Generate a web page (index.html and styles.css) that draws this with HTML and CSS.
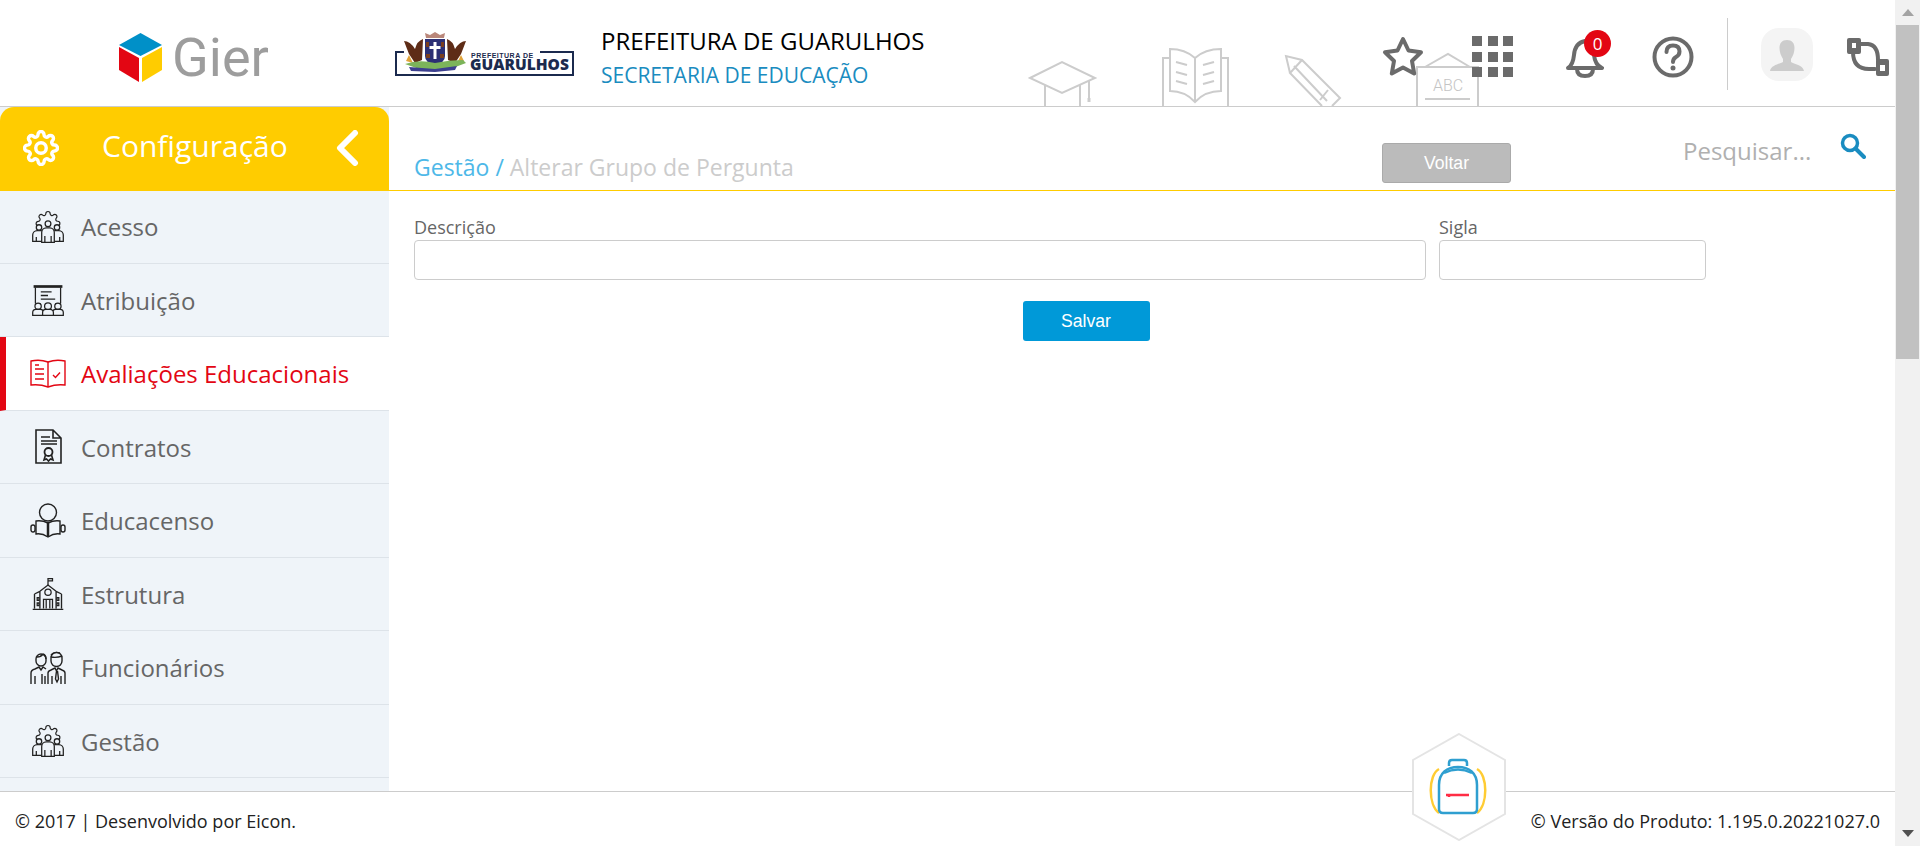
FILE: index.html
```html
<!DOCTYPE html>
<html lang="pt-BR">

<head>
	<meta charset="UTF-8">
	<meta name="viewport" content="width=device-width, initial-scale=1.0">
	<title>Alterar Grupo de Pergunta</title>
	<link rel="stylesheet" href="styles.css">
</head>

<body>

	<svg class="defs" width="0" height="0" aria-hidden="true">
		<symbol id="i-team" viewBox="-2 -2 40 40">
			<path transform="translate(3.6,-0.4) scale(1.2)" stroke-width="1.100" d="M19.4 15a1.65 1.65 0 0 0 .33 1.82l.06.06a2 2 0 0 1 0 2.83 2 2 0 0 1-2.83 0l-.06-.06a1.65 1.65 0 0 0-1.82-.33 1.65 1.65 0 0 0-1 1.51V21a2 2 0 0 1-2 2 2 2 0 0 1-2-2v-.09A1.65 1.65 0 0 0 9 19.4a1.65 1.65 0 0 0-1.82.33l-.06.06a2 2 0 0 1-2.83 0 2 2 0 0 1 0-2.83l.06-.06a1.65 1.65 0 0 0 .33-1.82 1.65 1.65 0 0 0-1.51-1H3a2 2 0 0 1-2-2 2 2 0 0 1 2-2h.09A1.65 1.65 0 0 0 4.6 9a1.65 1.65 0 0 0-.33-1.82l-.06-.06a2 2 0 0 1 0-2.83 2 2 0 0 1 2.83 0l.06.06a1.65 1.65 0 0 0 1.82.33H9a1.65 1.65 0 0 0 1-1.51V3a2 2 0 0 1 2-2 2 2 0 0 1 2 2v.09a1.65 1.65 0 0 0 1 1.51 1.65 1.65 0 0 0 1.82-.33l.06-.06a2 2 0 0 1 2.83 0 2 2 0 0 1 0 2.83l-.06.06a1.65 1.65 0 0 0-.33 1.82V9a1.65 1.65 0 0 0 1.51 1H21a2 2 0 0 1 2 2 2 2 0 0 1-2 2h-.09a1.65 1.65 0 0 0-1.51 1z"/>
			<g fill="#eff4f9">
				<path d="M1 34v-7a5 5 0 0 1 5-5h4a5 5 0 0 1 5 5v7z"/>
				<path d="M21 34v-7a5 5 0 0 1 5-5h4a5 5 0 0 1 5 5v7z"/>
				<circle cx="8" cy="18.500" r="3"/>
				<circle cx="28" cy="18.500" r="3"/>
				<path d="M11 35V24a5 5 0 0 1 5-5h4a5 5 0 0 1 5 5v11z"/>
				<circle cx="18" cy="14.500" r="3.200"/>
			</g>
			<path d="M5 29v5M31 29v5M14.500 28v7M21.500 28v7"/>
		</symbol>
		<symbol id="i-class" viewBox="-2 -2 40 40">
			<path d="M2 3h32" stroke-width="3"/>
			<path d="M4 4v18M32 4v18M4 22h6M26 22h6M10 9h12M10 13h8M10 17h16" />
			<g fill="#eff4f9">
				<circle cx="7" cy="25" r="3.500"/>
				<circle cx="29" cy="25" r="3.500"/>
				<circle cx="18" cy="25" r="3.800"/>
				<path d="M1 35v-3a3.500 3.500 0 0 1 3.500-3.500h5a3.500 3.500 0 0 1 3.500 3.500v3z"/>
				<path d="M23 35v-3a3.500 3.500 0 0 1 3.500-3.500h5a3.500 3.500 0 0 1 3.500 3.500v3z"/>
				<path d="M12 35v-3a3.500 3.500 0 0 1 3.500-3.500h5a3.500 3.500 0 0 1 3.500 3.500v3z"/>
			</g>
		</symbol>
		<symbol id="i-exam" viewBox="0 0 36 36">
			<path d="M1 5q9-2 17 1q8-3 17-1v24q-9-1-17 2q-8-3-17-2z"/>
			<path d="M18 6v25M5 9h4M5 13h9M5 18h9M5 23h9M23 19l2.500 2.500 4.500-5"/>
		</symbol>
		<symbol id="i-contract" viewBox="0 0 36 36">
			<path d="M6 1h17l8 8v25H6zM23 1v8h8" stroke-width="1.600"/>
			<path d="M11 8h9M11 12h16M11 15h16"/>
			<circle cx="18.500" cy="23" r="4" stroke-width="1.800"/>
			<path d="M15.500 26l-1.500 5 2.500-1 2 2 2-2 2.500 1-1.500-5" stroke-width="1.600"/>
		</symbol>
		<symbol id="i-reader" viewBox="0 0 36 36">
			<circle cx="18" cy="9.500" r="8.500"/>
			<path d="M18 20q-6-3-12-2v13q6-1 12 3q6-4 12-3V18q-6-1-12 2z" fill="#eff4f9"/>
			<path d="M18 20v14" stroke-width="2.500"/>
			<rect x="1" y="22" width="4" height="7" rx="2"/>
			<rect x="31" y="22" width="4" height="7" rx="2"/>
		</symbol>
		<symbol id="i-school" viewBox="-2 -1 40 38">
			<path d="M18 8V1h5v2.500h-5"/>
			<path d="M9 15l9-7 9 7M3 18l6-3v19M33 18l-6-3v19M3 18v16M33 18v16M1 35h34" stroke-width="1.500"/>
			<circle cx="18" cy="16" r="3.500"/>
			<path d="M13 34V24h10v10M16 24v10M20 24v10M6 22h2v3H6zM28 22h2v3h-2zM6 28h2v3H6zM28 28h2v3h-2z"/>
		</symbol>
		<symbol id="i-staff" viewBox="0 0 36 36">
			<path d="M6 9a5 5 0 0 1 10 0v2a5 5 0 0 1-10 0z"/>
			<path d="M7 7q4 0 6-3M13 4q3 1 3 5"/>
			<path d="M21 8a5.500 5.500 0 0 1 11 0v3a5.500 5.500 0 0 1-11 0z"/>
			<path d="M21 7q6 1 11-1M21 5q3-4 9-2"/>
			<path d="M1 34V23q0-3 4-4l4-2 2 3 2-3 3 2M5 26v8M12 24v10M15 26v8"/>
			<path d="M18 34V23q0-2 3-3l4-2 1.500 3 1.500-3 4 2q3 1 3 3v11M22 26v8M31 26v8M26.500 21l-1 8 1.500 3 1.500-3-1-8"/>
		</symbol>
	</svg>

	<div class="page">
		<header class="topbar">
			<svg class="topbar-art" viewBox="1020 45 470 62" aria-hidden="true">
				<path d="M1030 78l32-16 33 16-33 15zM1045 85v21M1080 85v21M1089 81v17"/>
				<path d="M1089 98v4" stroke-width="3"/>
				<path d="M1170 58h-7v48M1221 58h7v48M1170 49q15 0 25 9 10-9 26-9v42q-16 0-26 11-10-11-25-11zM1195 58v44"/>
				<path d="M1176 62l11 3M1176 72l11 3M1176 81l11 3M1214 62l-11 3M1214 72l-11 3M1214 81l-11 3"/>
				<path d="M1290 73l-4-17 16 4 38 38-8 8M1322 106l-32-33 12-13M1294 66l33 35M1328 90l-8 10"/>
				<path d="M1417 106V67h61v39M1425 67l23-13 22 13"/>
				<path d="M1425 99h45"/>
				<text x="1448" y="91" text-anchor="middle" class="abc">ABC</text>
			</svg>

			<div class="brand">
				<svg class="cube" viewBox="0 0 44 49" aria-hidden="true">
					<path fill="#0090c8" d="M21.500 0L43 12 21.500 23 0 12z"/>
					<path fill="#e30613" d="M0 14l20 11v24L0 37z"/>
					<path fill="#ffcc00" d="M23 25l20-11v23L23 49z"/>
				</svg>
				<span class="brand-name">Gier</span>
			</div>

			<svg class="city-logo" viewBox="0 0 180 46" role="img" aria-label="Prefeitura de Guarulhos">
				<path class="city-frame" d="M9 21H1v23h177V21h-33"/>
				<path fill="#b9877a" d="M31 7l-1-5 5 2 5-3 5 3 5-2-1 5z"/>
				<path fill="#5e2c17" d="M28 8q-6 2-8 10-5-8-11-8 3 8 5 13l6 9 7-3z"/>
				<path fill="#5e2c17" d="M52 8q6 2 8 10 5-8 11-8-3 8-5 13l-6 9-7-3z"/>
				<path fill="#e0a33a" d="M14 24l4 8-7-2zM66 24l-4 8 7-2z"/>
				<path fill="#2c2f74" d="M30 8h20v17q0 7-10 9-10-2-10-9z"/>
				<path fill="#fff" d="M38.500 11h3v4h4v3h-4v10h-3V18h-4v-3h4z"/>
				<path fill="#7a3d1e" d="M31 11h3v5h-3zM46 11h3v5h-3zM31 23h4v4h-4zM45 23h4v4h-4z"/>
				<path fill="#7cb45a" d="M10 33q14-5 30-1 14-3 28-3l3 3-16 6-28 1z"/>
				<path fill="#3c3f8f" d="M14 36l26 2 22-3-2 4-20 2-24-1z"/>
				<text x="76" y="26.500" class="city-small">PREFEITURA DE</text>
				<text x="75" y="39" class="city-big">GUARULHOS</text>
			</svg>

			<div class="org">
				<div class="org-name">PREFEITURA DE GUARULHOS</div>
				<div class="org-dept">SECRETARIA DE EDUCAÇÃO</div>
			</div>

			<div class="tools">
				<svg class="tool" viewBox="0 0 42 42" aria-hidden="true">
					<path d="M21 3l5.500 11.500 12.500 1.700-9 8.800 2.200 12.500L21 31.500 9.800 37.500 12 25l-9-8.800 12.500-1.700z"/>
				</svg>
				<div class="apps">
					<i></i><i></i><i></i><i></i><i></i><i></i><i></i><i></i><i></i>
				</div>
				<div class="bell">
					<svg class="tool" viewBox="0 0 42 42" aria-hidden="true">
						<path d="M6 32q5-3 6-13 1-12 11-14 8 2 9 14 1 10 8 13zM15 33q0 7 8 7t8-7"/>
					</svg>
					<span class="badge">0</span>
				</div>
				<svg class="tool" viewBox="0 0 42 42" aria-hidden="true">
					<circle cx="21" cy="21" r="18.500"/>
					<path d="M14.500 16q0-6.500 6.500-6.500t6.500 6q0 3.500-3.500 5.500-3 1.700-3 5"/>
					<circle class="solid" cx="21" cy="32" r="2.500"/>
				</svg>
				<div class="tools-sep"></div>
				<div class="avatar">
					<svg viewBox="0 0 52 53" aria-hidden="true">
						<path d="M26 12c5 0 7.500 3 7.500 8 0 4-1.500 8-3.500 11v3c3 2 12 3 13 9H9c1-6 10-7 13-9v-3c-2-3-3.500-7-3.500-11 0-5 2.500-8 7.500-8z"/>
					</svg>
				</div>
				<svg class="tool route" viewBox="0 0 42 38" aria-hidden="true">
					<path d="M14 6h7q10 1 10 16M6 14q0 17 16 17h6"/>
					<path class="solid" fill-rule="evenodd" d="M2 0h10a2 2 0 0 1 2 2v12a2 2 0 0 1-2 2H2a2 2 0 0 1-2-2V2a2 2 0 0 1 2-2zM5 5v5h4V5zM31 21h9a2 2 0 0 1 2 2v13a2 2 0 0 1-2 2h-9a2 2 0 0 1-2-2V23a2 2 0 0 1 2-2zM33 27v6h5v-6z"/>
				</svg>
			</div>
		</header>

		<div class="body-row">
			<aside class="sidebar">
				<div class="side-head">
					<svg class="side-gear" viewBox="0 0 24 24" aria-hidden="true">
						<path d="M19.4 15a1.65 1.65 0 0 0 .33 1.82l.06.06a2 2 0 0 1 0 2.83 2 2 0 0 1-2.83 0l-.06-.06a1.65 1.65 0 0 0-1.82-.33 1.65 1.65 0 0 0-1 1.51V21a2 2 0 0 1-2 2 2 2 0 0 1-2-2v-.09A1.65 1.65 0 0 0 9 19.4a1.65 1.65 0 0 0-1.82.33l-.06.06a2 2 0 0 1-2.83 0 2 2 0 0 1 0-2.83l.06-.06a1.65 1.65 0 0 0 .33-1.82 1.65 1.65 0 0 0-1.51-1H3a2 2 0 0 1-2-2 2 2 0 0 1 2-2h.09A1.65 1.65 0 0 0 4.6 9a1.65 1.65 0 0 0-.33-1.82l-.06-.06a2 2 0 0 1 0-2.83 2 2 0 0 1 2.83 0l.06.06a1.65 1.65 0 0 0 1.82.33H9a1.65 1.65 0 0 0 1-1.51V3a2 2 0 0 1 2-2 2 2 0 0 1 2 2v.09a1.65 1.65 0 0 0 1 1.51 1.65 1.65 0 0 0 1.82-.33l.06-.06a2 2 0 0 1 2.83 0 2 2 0 0 1 0 2.83l-.06.06a1.65 1.65 0 0 0-.33 1.82V9a1.65 1.65 0 0 0 1.51 1H21a2 2 0 0 1 2 2 2 2 0 0 1-2 2h-.09a1.65 1.65 0 0 0-1.51 1z"/>
						<circle cx="12" cy="12" r="3.500"/>
					</svg>
					<span class="side-title">Configuração</span>
					<svg class="side-back" viewBox="0 0 24 36" aria-hidden="true">
						<path d="M20 3L5 18l15 15"/>
					</svg>
				</div>
				<ul class="menu">
					<li class="menu-item">
						<svg class="menu-icon"><use href="#i-team"/></svg>
						Acesso
					</li>
					<li class="menu-item">
						<svg class="menu-icon"><use href="#i-class"/></svg>
						Atribuição
					</li>
					<li class="menu-item active">
						<svg class="menu-icon"><use href="#i-exam"/></svg>
						Avaliações Educacionais
					</li>
					<li class="menu-item">
						<svg class="menu-icon"><use href="#i-contract"/></svg>
						Contratos
					</li>
					<li class="menu-item">
						<svg class="menu-icon"><use href="#i-reader"/></svg>
						Educacenso
					</li>
					<li class="menu-item">
						<svg class="menu-icon"><use href="#i-school"/></svg>
						Estrutura
					</li>
					<li class="menu-item">
						<svg class="menu-icon"><use href="#i-staff"/></svg>
						Funcionários
					</li>
					<li class="menu-item">
						<svg class="menu-icon"><use href="#i-team"/></svg>
						Gestão
					</li>
				</ul>
			</aside>

			<main class="content">
				<div class="content-head">
					<div class="crumbs"><span class="crumb-root">Gestão /</span> Alterar Grupo de Pergunta</div>
					<button type="button" class="btn btn-back">Voltar</button>
					<div class="search">
						<span class="search-text">Pesquisar...</span>
						<svg class="search-icon" viewBox="0 0 26 26" aria-hidden="true">
							<circle cx="10" cy="10" r="7.500"/>
							<path d="M15.500 15.500L24 24" stroke-width="4"/>
						</svg>
					</div>
				</div>
				<form class="form">
					<div class="form-row">
						<div class="field field-desc">
							<label for="descricao">Descrição</label>
							<input type="text" id="descricao">
						</div>
						<div class="field field-sigla">
							<label for="sigla">Sigla</label>
							<input type="text" id="sigla">
						</div>
					</div>
					<div class="form-actions">
						<button type="button" class="btn btn-save">Salvar</button>
					</div>
				</form>
			</main>
		</div>

		<footer class="footer">
			<span>© 2017 | Desenvolvido por Eicon.</span>
			<span>© Versão do Produto: 1.195.0.20221027.0</span>
		</footer>

		<svg class="hexa" viewBox="0 0 94 108" aria-hidden="true">
			<path class="hexa-shape" d="M47 1l46 26v54l-46 26-46-26V27z"/>
			<path class="bag-strap" d="M27 36C16 42 16 72 27 80M65 36c11 6 11 36 0 44"/>
			<path class="bag-body" d="M27 76V52c0-12 8-18 19-18s19 6 19 18v24q0 4-4 4H31q-4 0-4-4z"/>
			<path class="bag-body" d="M37 33v-3q0-3 3-3h12q3 0 3 3v3M32 40q14-7 28 0"/>
			<path class="bag-zip" d="M34 62h23M37 62v2"/>
		</svg>
	</div>

	<div class="scrollbar">
		<div class="scroll-btn"><span class="arrow-up"></span></div>
		<div class="scroll-thumb"></div>
		<div class="scroll-track"></div>
		<div class="scroll-btn"><span class="arrow-down"></span></div>
	</div>

</body>

</html>
```

FILE: styles.css
```css
* {
	box-sizing: border-box;
}

body {
	margin: 0;
	height: 846px;
	overflow: hidden;
	display: flex;
	background-color: #fff;
	font-family: "Open Sans", "Liberation Sans", sans-serif;
}

.defs {
	position: absolute;
}

.page {
	position: relative;
	flex: 1;
	min-width: 0;
	display: flex;
	flex-direction: column;
}

/* top bar */
.topbar {
	position: relative;
	flex: none;
	height: 107px;
	display: flex;
	align-items: flex-start;
	border-bottom: 1px solid #ccc;
}

.topbar-art {
	position: absolute;
	left: 1020px;
	top: 45px;
	width: 470px;
	height: 62px;
	fill: none;
	stroke: #ccc;
	stroke-width: 2;
}

.abc {
	fill: #c4c4c4;
	stroke: none;
	font-family: "Roboto", sans-serif;
	font-weight: 300;
	font-size: 16px;
}

.brand {
	flex: none;
	width: 395px;
	padding: 33px 0 0 119px;
	display: flex;
	align-items: flex-start;
}

.cube {
	width: 44px;
	height: 49px;
}

.brand-name {
	margin: -9px 0 0 9px;
	font-family: "Roboto", sans-serif;
	font-size: 54px;
	line-height: 67px;
	color: #9d9d9d;
}

.city-logo {
	flex: none;
	width: 180px;
	height: 46px;
	margin-top: 31px;
}

.city-frame {
	fill: none;
	stroke: #1b2a4e;
	stroke-width: 2;
}

.city-small {
	fill: #1b2a4e;
	font-family: "Liberation Sans", sans-serif;
	font-weight: 700;
	font-size: 7px;
	letter-spacing: 0.5px;
}

.city-big {
	fill: #1b2a4e;
	font-family: "Open Sans", sans-serif;
	font-weight: 800;
	font-size: 15.500px;
}

.org {
	margin: 26px 0 0 26px;
	position: relative;
}

.org-name {
	font-size: 24px;
	line-height: 30px;
	color: #000;
}

.org-dept {
	margin-top: 4px;
	font-size: 21px;
	line-height: 30px;
	color: #1a8cc0;
}

.tools {
	position: absolute;
	left: 1382px;
	top: 36px;
	display: flex;
	align-items: flex-start;
	gap: 48px;
}

.tool {
	display: block;
	width: 42px;
	height: 42px;
	fill: none;
	stroke: #6b6b6b;
	stroke-width: 4;
	stroke-linejoin: round;
	stroke-linecap: round;
}

.tool .solid {
	fill: #6b6b6b;
	stroke: none;
}

.apps {
	display: grid;
	grid-template-columns: repeat(3, 10px);
	grid-auto-rows: 10px;
	gap: 5.500px;
	margin-right: 1px;
}

.apps i {
	background-color: #6b6b6b;
}

.bell {
	position: relative;
	width: 42px;
	height: 42px;
}

.badge {
	position: absolute;
	left: 22px;
	top: -6px;
	width: 27px;
	height: 27px;
	border-radius: 50%;
	background-color: #e30613;
	color: #fff;
	font-size: 17px;
	line-height: 27px;
	text-align: center;
}

.tools-sep {
	width: 1px;
	height: 72px;
	margin: -18px -15px 0 -15px;
	background-color: #ccc;
}

.avatar {
	width: 52px;
	height: 53px;
	margin: -8px -14px 0 0;
	border-radius: 18px;
	background-color: #f4f4f4;
}

.avatar svg {
	display: block;
	fill: #ccc;
}

.route {
	height: 38px;
	margin-top: 2px;
}

/* body */
.body-row {
	flex: 1;
	min-height: 0;
	display: flex;
}

.sidebar {
	flex: none;
	width: 389px;
	overflow: hidden;
	background-color: #eff4f9;
}

.side-head {
	height: 84px;
	padding: 0 30px 3px 23px;
	display: flex;
	align-items: center;
	background-color: #ffcc00;
	border-radius: 14px 14px 0 0;
	color: #fff;
}

.side-gear {
	flex: none;
	width: 36px;
	height: 36px;
	fill: none;
	stroke: #fff;
	stroke-width: 2.300;
}

.side-title {
	flex: 1;
	margin: -5px 0 0 43px;
	font-size: 30px;
}

.side-back {
	flex: none;
	width: 24px;
	height: 36px;
	fill: none;
	stroke: #fff;
	stroke-width: 6;
	stroke-linecap: round;
	stroke-linejoin: round;
}

.menu {
	margin: -1px 0 0 0;
	padding: 0;
	list-style: none;
}

.menu-item {
	height: 73.500px;
	padding: 1px 0 0 30px;
	display: flex;
	align-items: center;
	gap: 15px;
	border-bottom: 1px solid #dde3e9;
	color: #666;
	font-size: 24px;
}

.menu-icon {
	flex: none;
	width: 36px;
	height: 36px;
	fill: none;
	stroke: #222;
	stroke-width: 1.400;
}

.menu-item.active {
	background-color: #fff;
	border-left: 6px solid #e30613;
	padding-left: 24px;
	color: #e30613;
}

.menu-item.active .menu-icon {
	stroke: #e30613;
}

.content {
	flex: 1;
	min-width: 0;
}

.content-head {
	height: 84px;
	display: flex;
	align-items: flex-start;
	border-bottom: 1px solid #ffcc00;
}

.crumbs {
	flex: none;
	width: 993px;
	padding: 45px 0 0 25px;
	font-size: 23px;
	line-height: 30px;
	color: #ccc;
}

.crumb-root {
	color: #4db8e8;
}

.btn {
	height: 40px;
	border-radius: 3px;
	color: #fff;
	font-family: "Liberation Sans", sans-serif;
	font-size: 17.600px;
	cursor: pointer;
}

.btn-back {
	flex: none;
	width: 129px;
	margin-top: 36px;
	background-color: #bbb;
	border: 1px solid #aaa;
}

.search {
	display: flex;
	align-items: flex-start;
	margin-left: 172px;
}

.search-text {
	margin-top: 28px;
	width: 157px;
	font-size: 24px;
	line-height: 32px;
	color: #b0b0b0;
}

.search-icon {
	flex: none;
	width: 26px;
	height: 26px;
	margin-top: 26px;
	fill: none;
	stroke: #1a8cc0;
	stroke-width: 3.500;
	stroke-linecap: round;
}

.form {
	width: 1344px;
	margin-left: 25px;
	padding-top: 24px;
}

.form-row {
	display: flex;
	gap: 13px;
}

.field label {
	display: block;
	height: 25px;
	font-size: 18px;
	line-height: 25px;
	color: #666;
}

.field input {
	display: block;
	width: 100%;
	height: 40px;
	border: 1px solid #ccc;
	border-radius: 4px;
	background-color: #fff;
}

.field-desc {
	width: 1012px;
}

.field-sigla {
	width: 267px;
}

.form-actions {
	margin-top: 21px;
	display: flex;
	justify-content: center;
}

.btn-save {
	width: 127px;
	background-color: #0099d8;
	border: none;
}

/* footer */
.footer {
	flex: none;
	height: 55px;
	padding: 11px 15px 0 15px;
	display: flex;
	justify-content: space-between;
	border-top: 1px solid #ccc;
	background-color: #fff;
	font-size: 18px;
	line-height: 36px;
	color: #222;
}

.hexa {
	position: absolute;
	left: 1412px;
	top: 733px;
	width: 94px;
	height: 108px;
	fill: none;
	stroke-width: 2.500;
}

.hexa-shape {
	fill: #fff;
	stroke: #e4e4e4;
	stroke-width: 2;
}

.bag-strap {
	stroke: #ffcc33;
}

.bag-body {
	stroke: #2f9fd0;
}

.bag-zip {
	stroke: #ff2d45;
}

/* fake window scrollbar */
.scrollbar {
	flex: none;
	width: 25px;
	display: flex;
	flex-direction: column;
	background-color: #f1f1f1;
}

.scroll-btn {
	flex: none;
	height: 25px;
	display: flex;
	align-items: center;
	justify-content: center;
}

.scroll-thumb {
	flex: none;
	height: 334px;
	margin: 0 1px;
	background-color: #c1c1c1;
}

.scroll-track {
	flex: 1;
}

.arrow-up {
	border-left: 6px solid transparent;
	border-right: 6px solid transparent;
	border-bottom: 7px solid #a3a3a3;
}

.arrow-down {
	border-left: 6px solid transparent;
	border-right: 6px solid transparent;
	border-top: 7px solid #505050;
}
```
